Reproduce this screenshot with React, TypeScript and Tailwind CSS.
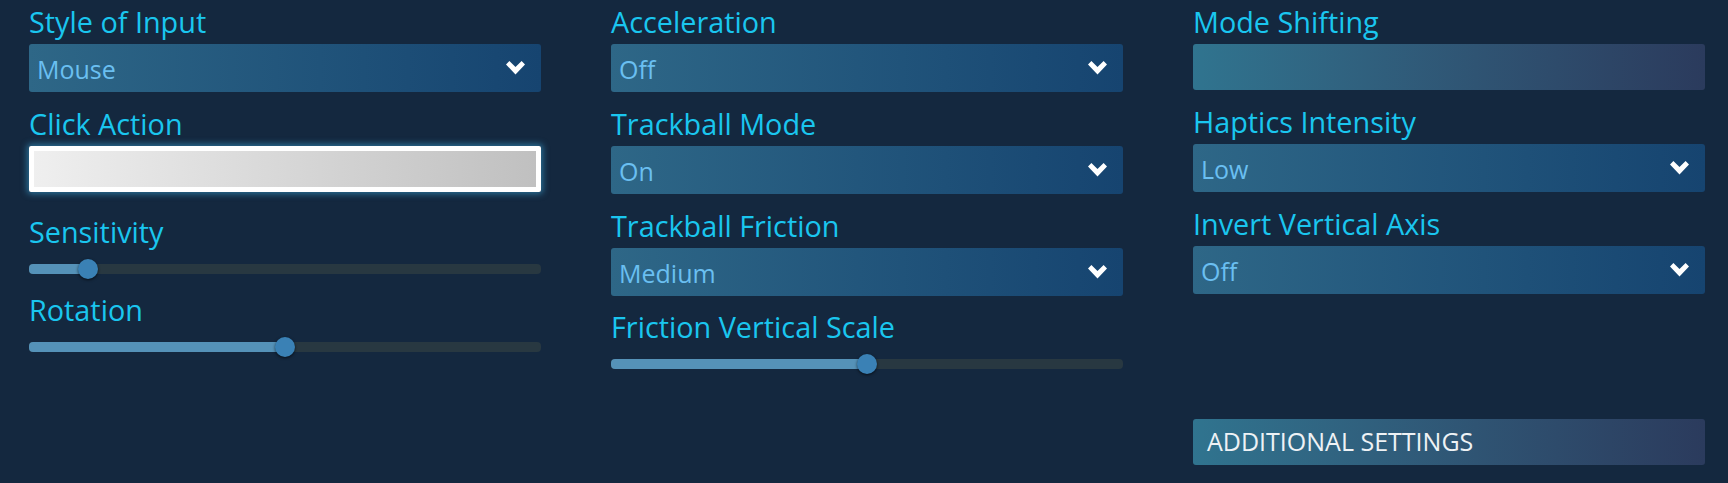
import React from "react";

function Chevron() {
  return (
    <svg width="19" height="14" viewBox="0 0 19 14" className="shrink-0">
      <polygon points="0,3.4 3.4,0 9.5,6 15.6,0 19,3.4 9.5,13.6" fill="#ffffff" />
    </svg>
  );
}

function Label({ children }: { children: React.ReactNode }) {
  return (
    <div className="h-[44px] whitespace-nowrap text-[28.8px] leading-[44px] text-[#1ac6ef]">
      {children}
    </div>
  );
}

function Dropdown({ value }: { value: string }) {
  return (
    <div className="flex h-[48px] items-center justify-between rounded-[3px] bg-linear-to-r from-[#2e6787] to-[#164470] pl-[8px] pr-[16px]">
      <span className="pt-[4px] text-[25px] leading-normal text-[#6abff1]">{value}</span>
      <Chevron />
    </div>
  );
}

function Slider({ p }: { p: number }) {
  return (
    <div className="flex h-[30px] items-center">
      <div className="relative h-[10px] w-full rounded-[4px] bg-[#283841]">
        <div
          className="absolute left-0 top-0 h-full rounded-[4px] bg-[#5592b8]"
          style={{ width: `calc(10px + ${p} * (100% - 20px))` }}
        />
        <div
          className="absolute top-[-5px] h-[20px] w-[20px] rounded-full bg-[#3a81b5] shadow-[0_1px_3px_rgba(0,0,0,0.65)]"
          style={{ left: `calc(${p} * (100% - 20px))` }}
        />
      </div>
    </div>
  );
}

function Item({
  label,
  children,
  className = "",
}: {
  label: string;
  children: React.ReactNode;
  className?: string;
}) {
  return (
    <div className={className}>
      <Label>{label}</Label>
      {children}
    </div>
  );
}

export default function App() {
  return (
    <div className="h-[483px] w-full overflow-hidden bg-[#14283f] font-['Open_Sans',sans-serif]">
      <div className="grid grid-cols-[512px_512px_512px] items-start gap-x-[70px] pl-[29px]">
        {/* Column 1 */}
        <div className="flex flex-col">
          <Item label="Style of Input">
            <Dropdown value="Mouse" />
          </Item>
          <Item label="Click Action" className="mt-[10px]">
            <div className="h-[46px] rounded-[2px] border-[5px] border-white bg-linear-to-r from-[#efefef] to-[#c0c0c0] shadow-[0_0_6px_2px_rgba(60,170,220,0.55)]" />
          </Item>
          <Item label="Sensitivity" className="mt-[18px]">
            <Slider p={0.1} />
          </Item>
          <Item label="Rotation" className="mt-[4px]">
            <Slider p={0.5} />
          </Item>
        </div>

        {/* Column 2 */}
        <div className="flex flex-col">
          <Item label="Acceleration">
            <Dropdown value="Off" />
          </Item>
          <Item label="Trackball Mode" className="mt-[10px]">
            <Dropdown value="On" />
          </Item>
          <Item label="Trackball Friction" className="mt-[10px]">
            <Dropdown value="Medium" />
          </Item>
          <Item label="Friction Vertical Scale" className="mt-[9px]">
            <Slider p={0.5} />
          </Item>
        </div>

        {/* Column 3 */}
        <div className="flex flex-col">
          <Item label="Mode Shifting">
            <div className="h-[46px] rounded-[3px] bg-linear-to-r from-[#30748f] to-[#2b3b5d]" />
          </Item>
          <Item label="Haptics Intensity" className="mt-[10px]">
            <Dropdown value="Low" />
          </Item>
          <Item label="Invert Vertical Axis" className="mt-[10px]">
            <Dropdown value="Off" />
          </Item>
          <button className="mt-[125px] flex h-[46px] items-center rounded-[3px] bg-linear-to-r from-[#30748f] to-[#2b3b5d] pl-[14px] text-left text-[25px] leading-normal text-[#eef2f5]">
            ADDITIONAL SETTINGS
          </button>
        </div>
      </div>
    </div>
  );
}
